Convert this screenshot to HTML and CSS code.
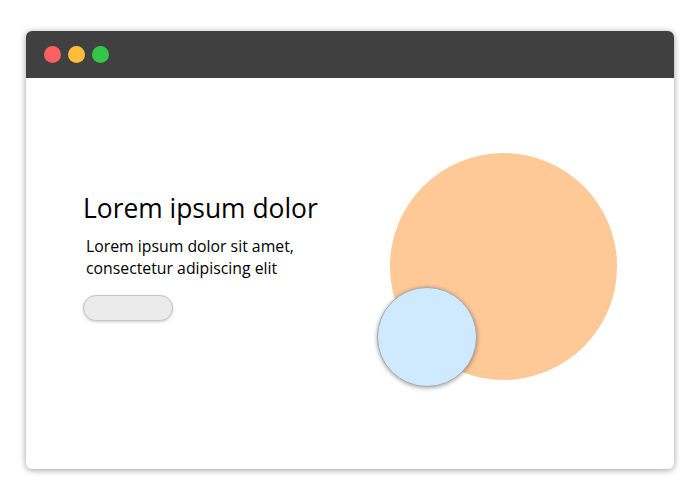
FILE: index.html
```html
<!DOCTYPE html>
<html>
<head>
<meta charset="utf-8">
<link rel="stylesheet" href="styles.css">
</head>
<body>
<div class="window">
  <div class="titlebar">
    <span class="dot red"></span>
    <span class="dot yellow"></span>
    <span class="dot green"></span>
  </div>
  <div class="content">
    <div class="hero-text">
      <h1 class="title">Lorem ipsum dolor</h1>
      <p class="lead">Lorem ipsum dolor sit amet,<br>consectetur adipiscing elit</p>
      <div class="pill"></div>
    </div>
    <div class="art">
      <div class="big-circle">
        <div class="small-circle"></div>
      </div>
    </div>
  </div>
</div>
</body>
</html>
```
FILE: styles.css
```css
html, body {
  margin: 0;
  padding: 0;
  background: #ffffff;
}
body {
  font-family: "Open Sans", "Liberation Sans", sans-serif;
  padding: 31px 26px;
}
.window {
  width: 648px;
  height: 438px;
  border-radius: 6px;
  background: #ffffff;
  box-shadow: 0 1px 6px rgba(0,0,0,0.4);
  overflow: hidden;
  display: flex;
  flex-direction: column;
}
.titlebar {
  height: 47px;
  background: #404040;
  display: flex;
  align-items: center;
  gap: 7px;
  padding-left: 18px;
  flex-shrink: 0;
}
.dot {
  width: 17px;
  height: 17px;
  border-radius: 50%;
}
.red { background: #fe5f5f; }
.yellow { background: #febd3a; }
.green { background: #32c748; }
.content {
  flex: 1;
  display: flex;
  align-items: flex-start;
  justify-content: space-between;
  padding: 0 57px 0 57px;
}
.hero-text {
  padding-top: 112px;
}
.title {
  margin: 0;
  font-size: 26.4px;
  font-weight: 400;
  line-height: 36px;
  color: #000;
}
.lead {
  margin: 9px 0 0 3px;
  font-size: 15.8px;
  line-height: 22px;
  color: #000;
}
.pill {
  margin: 16px 0 0 0;
  width: 88px;
  height: 24px;
  border-radius: 13px;
  background: #ebebeb;
  border: 1px solid #c6c6c6;
  box-shadow: 0 1px 3px rgba(0,0,0,0.2);
}
.art {
  padding-top: 75px;
}
.big-circle {
  position: relative;
  width: 227px;
  height: 227px;
  border-radius: 50%;
  background: #fec897;
}
.small-circle {
  position: absolute;
  left: -13px;
  top: 134px;
  width: 98px;
  height: 98px;
  border-radius: 50%;
  background: #cfe9fe;
  border: 1px solid #a9a9a9;
  box-shadow: 0 1px 4px rgba(0,0,0,0.35);
}
```
